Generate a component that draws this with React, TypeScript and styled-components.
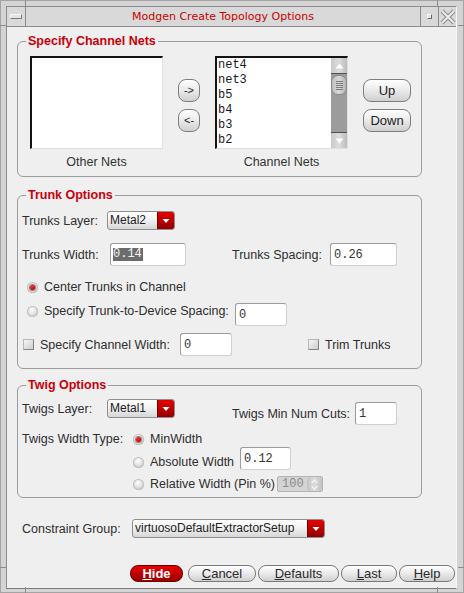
import React from "react";
import styled, { createGlobalStyle, css } from "styled-components";

const GlobalStyle = createGlobalStyle`
  * { box-sizing: border-box; }
  html, body { margin: 0; padding: 0; background: #d4d4d4; }
  body { font-family: "Liberation Sans", Arial, sans-serif; font-size: 12.5px; color: #2e2e2e; }
`;

/* ---------- window frame ---------- */
const Frame = styled.div`
  position: relative;
  width: 464px;
  height: 593px;
  background: #d4d4d4;
  border: 1px solid #a4a4a4;
  padding: 5px 6px 3px 5px;
`;

const Mark = styled.div<{ $v?: boolean; $pos: string }>`
  position: absolute;
  background: #8c8c8c;
  ${(p) =>
    p.$v
      ? css`width: 1px; height: 6px; ${p.$pos}`
      : css`height: 1px; width: 6px; ${p.$pos}`}
`;

const Window = styled.div`
  height: 100%;
  display: flex;
  flex-direction: column;
  border: 1px solid #8c8c8c;
  border-right-color: #f7f7f7;
  border-bottom-color: #7c7c7c;
`;

const TitleBar = styled.div`
  height: 20px;
  flex: none;
  display: grid;
  grid-template-columns: 18px 1fr 18px 18px;
  background: #d9d9d9;
  border-bottom: 1px solid #8c8c8c;
`;

const TitleCell = styled.div<{ $sep?: boolean }>`
  display: flex;
  align-items: center;
  justify-content: center;
  ${(p) => p.$sep && css`border-left: 1px solid #8c8c8c;`}
`;

const TitleText = styled.span`
  font-family: "DejaVu Sans", sans-serif;
  font-size: 11px;
  color: #c80000;
`;

const MenuGlyph = styled.span`
  width: 12px;
  height: 5px;
  background: #e4e4e4;
  border: 1px solid #f8f8f8;
  border-right-color: #7a7a7a;
  border-bottom-color: #7a7a7a;
`;

const MinGlyph = styled.span`
  width: 5px;
  height: 5px;
  background: #e4e4e4;
  border: 1px solid #f8f8f8;
  border-right-color: #6a6a6a;
  border-bottom-color: #6a6a6a;
`;

const Content = styled.div`
  flex: 1;
  background: #efefef;
  display: flex;
  flex-direction: column;
  padding: 7px 1px 0 10px;
`;

/* ---------- groups ---------- */
const Group = styled.fieldset<{ $mt: number }>`
  margin: ${(p) => p.$mt}px 0 0 0;
  padding: 0;
  width: 405px;
  min-width: 0;
  border: 1px solid #9c9c9c;
  border-radius: 6px;
`;

const Legend = styled.legend`
  margin-left: 8px;
  padding: 0 2px;
  font-weight: bold;
  font-size: 12.5px;
  line-height: 14px;
  color: #c8000a;
`;

const Body = styled.div<{ $pt: number; $pb: number }>`
  display: flex;
  flex-direction: column;
  padding: ${(p) => p.$pt}px 0 ${(p) => p.$pb}px 4px;
`;

const Row = styled.div<{ $h: number; $mt?: number; $align?: string; $pl?: number }>`
  display: flex;
  align-items: ${(p) => p.$align ?? "center"};
  height: ${(p) => p.$h}px;
  margin-top: ${(p) => p.$mt ?? 0}px;
  padding-left: ${(p) => p.$pl ?? 0}px;
`;

const Sub = styled.div<{ $mt?: number; $h?: number }>`
  display: flex;
  align-items: center;
  margin-top: ${(p) => p.$mt ?? 0}px;
  height: ${(p) => (p.$h ? `${p.$h}px` : "auto")};
`;

const Label = styled.span<{ $w?: number; $ml?: number }>`
  flex: none;
  white-space: nowrap;
  font-size: 12.5px;
  color: #2e2e2e;
  ${(p) => p.$w !== undefined && css`width: ${p.$w}px;`}
  margin-left: ${(p) => p.$ml ?? 0}px;
`;

const Option = styled.label<{ $w?: number; $ml?: number; $self?: string }>`
  display: flex;
  align-items: center;
  gap: 6px;
  height: 16px;
  flex: none;
  white-space: nowrap;
  font-size: 12.5px;
  color: #2e2e2e;
  ${(p) => p.$w !== undefined && css`width: ${p.$w}px;`}
  margin-left: ${(p) => p.$ml ?? 0}px;
  ${(p) => p.$self && css`align-self: ${p.$self};`}
`;

const Radio = styled.span<{ $on?: boolean }>`
  width: 11px;
  height: 11px;
  flex: none;
  border-radius: 50%;
  background: radial-gradient(circle at 45% 35%, #ffffff 0%, #e2e2e2 45%, #b4b4b4 100%);
  box-shadow: inset 0 0 0 1px #c0c0c0;
  display: flex;
  align-items: center;
  justify-content: center;
  &::after {
    content: "";
    display: ${(p) => (p.$on ? "block" : "none")};
    width: 5px;
    height: 5px;
    border-radius: 50%;
    background: radial-gradient(circle at 40% 35%, #ff3030, #c00000 70%);
    box-shadow: 0 0 0 1px #9a8080;
  }
`;

const Check = styled.span`
  width: 11px;
  height: 11px;
  flex: none;
  background: linear-gradient(135deg, #f6f6f6, #cdcdcd);
  border: 1px solid #b8b8b8;
  border-right-color: #858585;
  border-bottom-color: #858585;
`;

const Field = styled.div<{ $w: number; $h?: number; $top?: boolean }>`
  width: ${(p) => p.$w}px;
  height: ${(p) => p.$h ?? 23}px;
  flex: none;
  background: #ffffff;
  border: 1px solid #d0d0d0;
  border-top-color: #9c9c9c;
  border-left-color: #9c9c9c;
  border-radius: 3px;
  padding-left: 3px;
  display: flex;
  align-items: center;
  font-family: "Liberation Mono", monospace;
  font-size: 12px;
  color: #333;
  ${(p) => p.$top && css`align-self: flex-start;`}
`;

const Selected = styled.span`
  background: #6c6c6c;
  color: #f4f4f4;
  margin-left: -1px;
  padding: 0 1px 0 0;
  line-height: 13px;
`;

const Spacer = styled.span<{ $w: number }>`
  width: ${(p) => p.$w}px;
  flex: none;
`;

const Dropdown = styled.div<{ $w: number }>`
  width: ${(p) => p.$w}px;
  height: 19px;
  flex: none;
  display: flex;
  border: 1px solid #8e8e8e;
  border-radius: 3px;
  overflow: hidden;
  background: linear-gradient(#ffffff, #f2f2f2 45%, #d6d6d6);
`;

const DropText = styled.span`
  flex: 1;
  padding-left: 2px;
  font-size: 12px;
  line-height: 16px;
  color: #222;
  white-space: nowrap;
  overflow: hidden;
`;

const DropArrow = styled.span`
  width: 17px;
  flex: none;
  display: flex;
  align-items: center;
  justify-content: center;
  background: linear-gradient(#e40000, #b80000 55%, #900000);
  border-left: 1px solid #7a0000;
`;

const DownTri = () => (
  <svg width="8" height="6" viewBox="0 0 8 6">
    <path d="M0.5 1 L7.5 1 L4 5 Z" fill="#ffffff" />
  </svg>
);

/* ---------- channel nets ---------- */
const NetsGrid = styled.div`
  display: grid;
  grid-template-columns: 133px 22px 133px 48px;
  grid-template-rows: 93px 16px;
  column-gap: 15px;
  row-gap: 5px;
  padding: 8px 0 6px 12px;
`;

const ListBox = styled.div`
  display: flex;
  background: #ffffff;
  border: 2px solid #141414;
  border-right: 1px solid #e0e0e0;
  border-bottom: 1px solid #e0e0e0;
  overflow: hidden;
`;

const ListItems = styled.div`
  flex: 1;
  padding: 0 0 0 1px;
  font-family: "Liberation Mono", monospace;
  font-size: 12px;
  line-height: 15px;
  color: #1a1a1a;
`;

const ScrollBar = styled.div`
  width: 16px;
  flex: none;
  display: flex;
  flex-direction: column;
  background: #9c9c9c;
`;

const ScrollArrow = styled.div<{ $down?: boolean }>`
  height: 16px;
  flex: none;
  display: flex;
  align-items: center;
  justify-content: center;
  background: linear-gradient(90deg, #c9c9c9, #dcdcdc 50%, #bcbcbc);
  ${(p) =>
    p.$down ? css`border-top: 1px solid #505050;` : css`border-bottom: 1px solid #505050;`}
`;

const Thumb = styled.div`
  height: 20px;
  margin: 1px 0 0;
  flex: none;
  border-radius: 7px;
  border: 1px solid #8a8a8a;
  background: linear-gradient(90deg, #bcbcbc, #dadada 50%, #b4b4b4);
  display: flex;
  flex-direction: column;
  align-items: center;
  justify-content: center;
  gap: 1px;
`;

const Grip = styled.span`
  width: 7px;
  height: 1px;
  background: #7c7c7c;
`;

const Trough = styled.div`
  flex: 1;
`;

const ButtonStack = styled.div`
  display: flex;
  flex-direction: column;
  gap: 7px;
  padding-top: 23px;
`;

const RoundButton = styled.button<{ $small?: boolean }>`
  height: 23px;
  width: 100%;
  padding: 0;
  border: 1px solid #7e7e7e;
  border-radius: 8px;
  background: linear-gradient(#ffffff, #ececec 45%, #cfcfcf);
  font-family: "Liberation Sans", Arial, sans-serif;
  font-size: ${(p) => (p.$small ? 11 : 13)}px;
  color: #222;
  line-height: 21px;
`;

const ListCaption = styled.div`
  text-align: center;
  font-size: 12.5px;
  line-height: 16px;
  color: #333;
`;

/* ---------- spin box ---------- */
const SpinBox = styled.div`
  width: 46px;
  height: 16px;
  flex: none;
  display: flex;
  background: #d4d4d4;
  border: 1px solid #b4b4b4;
  border-radius: 2px;
`;

const SpinText = styled.span`
  flex: 1;
  padding-left: 4px;
  font-family: "Liberation Mono", monospace;
  font-size: 12px;
  line-height: 14px;
  color: #8c8c8c;
`;

const SpinArrows = styled.span`
  width: 15px;
  flex: none;
  display: flex;
  align-items: center;
  justify-content: center;
  background: linear-gradient(90deg, #c4c4c4, #dcdcdc 50%, #c0c0c0);
  border-radius: 3px;
`;

/* ---------- bottom ---------- */
const ButtonBar = styled.div`
  display: flex;
  justify-content: flex-end;
  gap: 2px;
  height: 17px;
  margin-top: 27px;
`;

const DlgButton = styled.button<{ $w: number; $primary?: boolean }>`
  width: ${(p) => p.$w}px;
  height: 17px;
  padding: 0;
  border: 1px solid #7a7a7a;
  border-radius: 8px;
  background: linear-gradient(#ffffff, #ececec 45%, #d0d0d0);
  font-family: "Liberation Sans", Arial, sans-serif;
  font-size: 13px;
  line-height: 15px;
  color: #2a2a2a;
  ${(p) =>
    p.$primary &&
    css`
      margin-right: 3px;
      background: linear-gradient(#e80000, #c00000 50%, #980000);
      border-color: #6a0000;
      color: #ffffff;
      font-weight: bold;
    `}
`;

const ChannelNets = ["net4", "net3", "b5", "b4", "b3", "b2"];

const Mn = ({ c, rest }: { c: string; rest: string }) => (
  <>
    <u>{c}</u>
    {rest}
  </>
);

export default function App() {
  return (
    <>
      <GlobalStyle />
      <Frame>
        <Mark $v $pos="left: 24px; top: -1px;" />
        <Mark $v $pos="left: 436px; top: -1px;" />
        <Mark $v $pos="left: 24px; bottom: -1px;" />
        <Mark $v $pos="left: 436px; bottom: -1px;" />
        <Mark $pos="left: -1px; top: 24px;" />
        <Mark $pos="left: -1px; top: 566px;" />
        <Mark $pos="right: -1px; top: 24px;" />
        <Mark $pos="right: -1px; top: 566px;" />
        <Window>
          <TitleBar>
            <TitleCell>
              <MenuGlyph />
            </TitleCell>
            <TitleCell $sep>
              <TitleText>Modgen Create Topology Options</TitleText>
            </TitleCell>
            <TitleCell $sep>
              <MinGlyph />
            </TitleCell>
            <TitleCell $sep>
              <svg width="16" height="16" viewBox="0 0 16 16">
                <path d="M2 2 L14 14 M14 2 L2 14" stroke="#8a8a8a" strokeWidth="4" />
                <path d="M2 2 L14 14 M14 2 L2 14" stroke="#ececec" strokeWidth="2" />
              </svg>
            </TitleCell>
          </TitleBar>
          <Content>
            <Group $mt={0}>
              <Legend>Specify Channel Nets</Legend>
              <NetsGrid>
                <ListBox />
                <ButtonStack>
                  <RoundButton $small>-&gt;</RoundButton>
                  <RoundButton $small>&lt;-</RoundButton>
                </ButtonStack>
                <ListBox>
                  <ListItems>
                    {ChannelNets.map((n) => (
                      <div key={n}>{n}</div>
                    ))}
                  </ListItems>
                  <ScrollBar>
                    <ScrollArrow>
                      <svg width="9" height="6" viewBox="0 0 9 6">
                        <path d="M0.5 5.5 L8.5 5.5 L4.5 0.5 Z" fill="#ffffff" />
                      </svg>
                    </ScrollArrow>
                    <Thumb>
                      <Grip />
                      <Grip />
                      <Grip />
                      <Grip />
                      <Grip />
                    </Thumb>
                    <Trough />
                    <ScrollArrow $down>
                      <svg width="9" height="6" viewBox="0 0 9 6">
                        <path d="M0.5 0.5 L8.5 0.5 L4.5 5.5 Z" fill="#ffffff" />
                      </svg>
                    </ScrollArrow>
                  </ScrollBar>
                </ListBox>
                <ButtonStack>
                  <RoundButton>Up</RoundButton>
                  <RoundButton>Down</RoundButton>
                </ButtonStack>
                <ListCaption>Other Nets</ListCaption>
                <span />
                <ListCaption>Channel Nets</ListCaption>
              </NetsGrid>
            </Group>

            <Group $mt={11}>
              <Legend>Trunk Options</Legend>
              <Body $pt={9} $pb={12}>
                <Row $h={19}>
                  <Label $w={85}>Trunks Layer:</Label>
                  <Dropdown $w={68}>
                    <DropText>Metal2</DropText>
                    <DropArrow>
                      <DownTri />
                    </DropArrow>
                  </Dropdown>
                </Row>
                <Row $h={23} $mt={13}>
                  <Label $w={88}>Trunks Width:</Label>
                  <Field $w={76}>
                    <Selected>0.14</Selected>
                  </Field>
                  <Spacer $w={46} />
                  <Label $w={98}>Trunks Spacing:</Label>
                  <Field $w={67}>0.26</Field>
                </Row>
                <Row $h={16} $mt={13}>
                  <Option $ml={5}>
                    <Radio $on />
                    Center Trunks in Channel
                  </Option>
                </Row>
                <Row $h={23} $mt={8} $align="flex-start">
                  <Option $w={208} $ml={5} $self="flex-start">
                    <Radio />
                    Specify Trunk-to-Device Spacing:
                  </Option>
                  <Field $w={52}>0</Field>
                </Row>
                <Row $h={23} $mt={7}>
                  <Option $w={157} $ml={1}>
                    <Check />
                    Specify Channel Width:
                  </Option>
                  <Field $w={52}>0</Field>
                  <Spacer $w={76} />
                  <Option>
                    <Check />
                    Trim Trunks
                  </Option>
                </Row>
              </Body>
            </Group>

            <Group $mt={9}>
              <Legend>Twig Options</Legend>
              <Body $pt={7} $pb={5}>
                <Row $h={26} $align="flex-start">
                  <Sub $h={19}>
                    <Label $w={85}>Twigs Layer:</Label>
                    <Dropdown $w={68}>
                      <DropText>Metal1</DropText>
                      <DropArrow>
                        <DownTri />
                      </DropArrow>
                    </Dropdown>
                  </Sub>
                  <Spacer $w={57} />
                  <Sub $mt={3}>
                    <Label $w={123}>Twigs Min Num Cuts:</Label>
                    <Field $w={42}>1</Field>
                  </Sub>
                </Row>
                <Row $h={16} $mt={6}>
                  <Label $w={111}>Twigs Width Type:</Label>
                  <Option>
                    <Radio $on />
                    MinWidth
                  </Option>
                </Row>
                <Row $h={23} $pl={111} $align="flex-end">
                  <Option $w={107}>
                    <Radio />
                    Absolute Width
                  </Option>
                  <Field $w={51} $top>
                    0.12
                  </Field>
                </Row>
                <Row $h={16} $mt={6} $pl={111}>
                  <Option $w={144}>
                    <Radio />
                    Relative Width (Pin %)
                  </Option>
                  <SpinBox>
                    <SpinText>100</SpinText>
                    <SpinArrows>
                      <svg width="7" height="11" viewBox="0 0 7 11">
                        <path d="M0.5 4 L3.5 1 L6.5 4" stroke="#f4f4f4" fill="none" strokeWidth="1.2" />
                        <path d="M0.5 7 L3.5 10 L6.5 7" stroke="#f4f4f4" fill="none" strokeWidth="1.2" />
                      </svg>
                    </SpinArrows>
                  </SpinBox>
                </Row>
              </Body>
            </Group>

            <Row $h={19} $mt={21} $pl={5}>
              <Label $w={110}>Constraint Group:</Label>
              <Dropdown $w={193}>
                <DropText>virtuosoDefaultExtractorSetup</DropText>
                <DropArrow>
                  <DownTri />
                </DropArrow>
              </Dropdown>
            </Row>

            <ButtonBar>
              <DlgButton $w={53} $primary>
                <Mn c="H" rest="ide" />
              </DlgButton>
              <DlgButton $w={68}>
                <Mn c="C" rest="ancel" />
              </DlgButton>
              <DlgButton $w={81}>
                <Mn c="D" rest="efaults" />
              </DlgButton>
              <DlgButton $w={56}>
                <Mn c="L" rest="ast" />
              </DlgButton>
              <DlgButton $w={56}>
                <Mn c="H" rest="elp" />
              </DlgButton>
            </ButtonBar>
          </Content>
        </Window>
      </Frame>
    </>
  );
}
